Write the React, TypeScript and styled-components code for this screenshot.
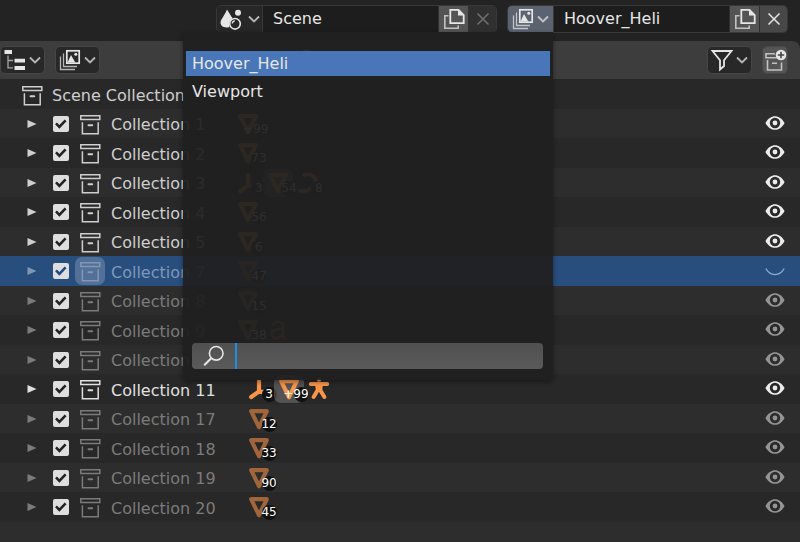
import React from "react";
import styled, { createGlobalStyle, css } from "styled-components";

const GlobalStyle = createGlobalStyle`
  *, *::before, *::after { box-sizing: border-box; }
  body {
    margin: 0;
    min-height: 100vh;
    background: #2d2d2d;
    color: #e6e6e6;
    font: 16px/20px "DejaVu Sans", Verdana, sans-serif;
  }
  button, input { font: inherit; color: inherit; margin: 0; padding: 0; border: 0; }
  button { display: inline-flex; align-items: center; justify-content: center; background: none; }
  svg { display: block; flex: none; overflow: visible; }
`;

/* ---------- icons ---------- */

type IconProps = { size?: number; children: React.ReactNode };

const Icon = ({ size = 20, children }: IconProps) => (
  <svg
    width={size}
    height={size}
    viewBox={`0 0 ${size} ${size}`}
    fill="none"
    stroke="currentColor"
    aria-hidden="true"
  >
    {children}
  </svg>
);

const ChevronIcon = () => (
  <Icon size={12}>
    <path d="M1 3.5 6 8.5 11 3.5" strokeWidth="1.9" opacity="0.75" />
  </Icon>
);

const SceneIcon = () => (
  <Icon size={26}>
    <path d="M8 3.5 13.6 12.5C10.5 14 9.5 17.5 10.5 20.9 6 22.5 1 20.5 1.6 16 2 13 6 9 8 3.5Z" fill="currentColor" stroke="none" />
    <circle cx="19" cy="6.7" r="3" fill="currentColor" stroke="none" />
    <circle cx="16" cy="17.8" r="5.3" strokeWidth="1.6" />
    <path d="M13.2 17.5a3 3 0 0 1 2.6-2.7" strokeWidth="1.3" />
  </Icon>
);

const LayersIcon = () => (
  <Icon size={22}>
    <path d="M1.5 7.5V20.5H16M4.5 4.5V17.5H18" strokeWidth="1.3" opacity="0.75" />
    <rect x="7.8" y="1.8" width="12.4" height="12.4" strokeWidth="1.7" />
    <path d="M8.5 13.5 12 6 16.3 13.5Z" fill="currentColor" stroke="none" />
    <circle cx="16.8" cy="5.2" r="1.5" fill="currentColor" stroke="none" />
  </Icon>
);

const CopyIcon = () => (
  <Icon size={22}>
    <path d="M5.5 7.8H1.8V20.2H15.2V17.5" strokeWidth="1.6" opacity="0.75" />
    <path d="M7.3 1.8H15.5L20.7 7V15.2H7.3Z" strokeWidth="1.8" />
    <path d="M15 1.5V7.5H21Z" fill="currentColor" stroke="none" />
  </Icon>
);

const CloseIcon = () => (
  <Icon size={12}>
    <path d="M0.5 0.5 11.5 11.5M11.5 0.5 0.5 11.5" strokeWidth="1.5" />
  </Icon>
);

const OutlinerIcon = () => (
  <Icon size={22}>
    <path d="M0.5 1H8V5H0.5ZM10.5 9.7H21V13.5H10.5ZM10.5 17H21V21H10.5Z" fill="currentColor" stroke="none" />
    <path d="M4 6.5V18.8H9M4 11.5H9" strokeWidth="1.3" opacity="0.65" />
  </Icon>
);

const FilterIcon = () => (
  <Icon size={22}>
    <path d="M1.5 2H20.5L13 11.3V17L9 20.5V11.3Z" strokeWidth="1.8" />
  </Icon>
);

const NewCollectionIcon = () => (
  <Icon size={22}>
    <path d="M11 4.7H2V8.7H13M3.5 11V21H17.5V13.5M8 14.3H13" strokeWidth="1.6" opacity="0.75" />
    <circle cx="17" cy="6" r="5.3" fill="currentColor" stroke="none" />
    <path d="M17 2.8V9.2M13.8 6H20.2" stroke="#444" strokeWidth="1.6" />
  </Icon>
);

const CollectionIcon = () => (
  <Icon>
    <path d="M0.8 0.8H19.8V4.6H0.8ZM2.4 7.2V18.7H18.2V7.2" strokeWidth="1.5" />
    <path d="M8.5 10.2H12.2" strokeWidth="2" strokeLinecap="round" />
  </Icon>
);

const SearchIcon = () => (
  <Icon size={22}>
    <circle cx="13.2" cy="8.3" r="6.8" strokeWidth="1.6" />
    <path d="M8.2 13.3 1.2 20.3" strokeWidth="2" />
  </Icon>
);

const EyeIcon = () => (
  <Icon>
    <path d="M0.4 10C3 5.3 6.5 3.2 10 3.2S17 5.3 19.6 10C17 14.7 13.5 16.8 10 16.8S3 14.7 0.4 10ZM10 4.8A5.2 5.2 0 1 0 10 15.2 5.2 5.2 0 1 0 10 4.8Z" fill="currentColor" fillRule="evenodd" stroke="none" />
    <circle cx="10" cy="10" r="2.4" fill="currentColor" stroke="none" />
  </Icon>
);

const EyeClosedIcon = () => (
  <Icon>
    <path d="M0.8 8.5C5.5 16.6 14.5 16.6 19.2 8.5" strokeWidth="1.4" />
  </Icon>
);

const TickIcon = () => (
  <Icon size={16}>
    <path d="M3 7.4 6.4 10.8 12.6 4.4" strokeWidth="2.6" />
  </Icon>
);

const ArrowIcon = () => (
  <Icon size={10}>
    <path d="M0.5 1 9.5 5 0.5 9Z" fill="currentColor" stroke="none" />
  </Icon>
);

type ObjectKind = "mesh" | "empty" | "armature" | "curve" | "font";

const objectShapes: Record<ObjectKind, React.ReactNode> = {
  mesh: <path d="M2.2 2.2H17.8L10 18.2Z" strokeWidth="4.2" strokeLinejoin="round" />,
  empty: <path d="M10 2V12.5L2.2 18M10 12.8H17" strokeWidth="4.2" strokeLinecap="round" strokeLinejoin="round" />,
  armature: (
    <>
      <circle cx="10" cy="0.5" r="2.2" fill="currentColor" stroke="none" />
      <path d="M1.8 5H18.2" strokeWidth="4" strokeLinecap="round" />
      <path d="M6 5H14L13 12H7Z" fill="currentColor" stroke="none" />
      <path d="M8.8 11 4.6 18M11.2 11 15.4 18" strokeWidth="4" strokeLinecap="round" />
    </>
  ),
  curve: <path d="M6 2C14 0 19 5 17.5 10M1.5 18C5 18 8 19 12 16" strokeWidth="3.6" strokeLinecap="round" />,
  font: <path d="M4 5.5C7 0.5 15 1 15 6V15.5Q15 18 18 18M15 9C8 9 3.5 10 3.5 14 3.5 19.5 12 19 15 14" strokeWidth="2.6" />,
};

/* ---------- top bar ---------- */

const TopBar = styled.header`
  display: flex;
  justify-content: flex-end;
  gap: 10px;
  height: 41px;
  padding: 5px 12px 8px;
  background: #232323;
`;

const IdBlock = styled.div`
  display: flex;
  flex: 0 1 281px;
  min-width: 0;
  height: 28px;
  border: 1px solid #383838;
  border-radius: 5px;
`;

const MenuAnchor = styled.div`
  position: relative;
  display: flex;
  flex: none;
`;

const BrowseButton = styled.button<{ $open?: boolean }>`
  flex: none;
  width: 46px;
  gap: 3px;
  border-right: 1px solid #383838;
  border-radius: 4px 0 0 4px;
  background: ${(p) => (p.$open ? "#5b6370" : "#272727")};
`;

const NameField = styled.input`
  flex: 1 1 0;
  width: 0;
  min-width: 0;
  padding-left: 10px;
  background: #1d1d1d;
`;

const BlockButton = styled.button<{ $end?: boolean }>`
  flex: none;
  width: ${(p) => (p.$end ? 28 : 30)}px;
  border-left: 1px solid #303030;
  border-radius: ${(p) => (p.$end ? "0 4px 4px 0" : "0")};
  background: ${(p) => (p.$end ? "#484848" : "#545454")};

  &:disabled {
    background: #303030;
    color: #707070;
  }
`;

/* ---------- drop-down ---------- */

const Popup = styled.div`
  position: absolute;
  z-index: 2;
  top: 100%;
  right: 1px;
  display: flex;
  flex-direction: column;
  width: 370px;
  height: 348px;
  padding: 19px 3px 11px;
  border-radius: 0 0 4px 4px;
  background: rgba(32, 32, 32, 0.94);
  box-shadow: 0 2px 5px rgba(0, 0, 0, 0.4);
`;

const Options = styled.div`
  display: flex;
  flex: 1;
  flex-direction: column;
  gap: 3px;
`;

const Option = styled.button<{ $active?: boolean }>`
  flex: none;
  justify-content: flex-start;
  height: 25px;
  padding: 0 6px;
  background: ${(p) => (p.$active ? "#4876b8" : "transparent")};
`;

const SearchBox = styled.label`
  display: flex;
  align-items: center;
  height: 26px;
  margin: 0 7px 0 6px;
  padding-left: 11px;
  gap: 10px;
  overflow: hidden;
  border-radius: 4px;
  background: linear-gradient(#505050, #5a5a5a);
`;

const SearchInput = styled.input`
  flex: 1;
  align-self: stretch;
  min-width: 0;
  border-left: 2px solid #1d8fe0;
  background: none;
`;

/* ---------- outliner ---------- */

const OutlinerHeader = styled.div`
  display: flex;
  align-items: center;
  gap: 10px;
  height: 38px;
  padding: 0 12px 0 0;
  border-radius: 0 8px 0 0;
  background: #3d3d3d;
`;

const HeaderBack = styled.div`
  background: #232323;
`;

const HeaderButton = styled.button<{ $square?: boolean }>`
  flex: none;
  width: ${(p) => (p.$square ? 26 : 45)}px;
  height: 28px;
  gap: 3px;
  border: 1px solid #464646;
  border-radius: 5px;
  background: ${(p) => (p.$square ? "#555" : "#282828")};
`;

const HeaderSearch = styled.label`
  display: flex;
  flex: 0 1 196px;
  align-items: center;
  height: 26px;
  margin: 0 auto;
  border-radius: 4px;
  background: #3a3a3a;
`;

const HeaderInput = styled.input`
  flex: 1;
  min-width: 0;
  background: none;
`;

const RootRow = styled.div`
  display: flex;
  align-items: center;
  gap: 10px;
  height: 30px;
  padding: 3px 22px 0;
  background: #282828;
  color: #cfcfcf;
`;

const Tree = styled.ul`
  margin: 0;
  padding: 0;
  list-style: none;
`;

type Tone = "normal" | "dim" | "active" | "selected";

const toneColor: Record<Tone, string> = {
  normal: "#cfcfcf",
  dim: "#7b7b7b",
  active: "#e0e0e0",
  selected: "#8097b8",
};

const Row = styled.li<{ $tone: Tone }>`
  display: flex;
  align-items: center;
  height: 29px;
  padding: 0 15px 0 27px;
  background: #2d2d2d;
  color: ${(p) => toneColor[p.$tone]};

  &:nth-child(even) {
    height: 30px;
    background: #282828;
  }

  ${(p) =>
    p.$tone === "selected" &&
    css`
      &:nth-child(even) {
        background: #284e7e;
      }
    `}
`;

const Disclosure = styled.button`
  width: 10px;
  height: 26px;
`;

const Check = styled.span<{ $tick: string }>`
  display: grid;
  margin-left: 16px;
  color: ${(p) => p.$tick};

  > * {
    grid-area: 1 / 1;
  }

  svg {
    pointer-events: none;
    visibility: hidden;
  }

  input:checked + svg {
    visibility: visible;
  }
`;

const CheckInput = styled.input`
  width: 16px;
  height: 16px;
  appearance: none;
  border-radius: 2px;
  background: #dedede;
`;

const IconCell = styled.span<{ $lit?: boolean }>`
  display: flex;
  align-items: center;
  justify-content: center;
  width: 30px;
  height: 28px;
  border-radius: 7px;
  background: ${(p) => (p.$lit ? "rgba(255, 255, 255, 0.2)" : "none")};
`;

const CollectionCell = styled(IconCell)`
  margin: 0 6px;
  padding-top: 2px;
`;

const Name = styled.label`
  padding-top: 3px;
  white-space: nowrap;
`;

const Objects = styled.span`
  display: flex;
  flex: 1;
  margin-left: 28px;
`;

const ObjectCell = styled(IconCell)<{ $bright: boolean }>`
  position: relative;
  color: ${(p) => (p.$bright ? "#f7954a" : "#a0653a")};
`;

const Count = styled.span<{ $wide: boolean }>`
  position: absolute;
  right: ${(p) => (p.$wide ? -5 : -3)}px;
  bottom: 1px;
  display: flex;
  justify-content: ${(p) => (p.$wide ? "flex-end" : "center")};
  width: 15px;
  border-radius: 8px;
  background: #111;
  color: #fff;
  font-size: 12px;
  line-height: 15px;
`;

const EyeButton = styled.button<{ $tone: Tone }>`
  width: 20px;
  height: 28px;
  align-self: flex-start;
  color: ${(p) => (p.$tone === "dim" ? "#949494" : p.$tone === "selected" ? "#8ea9d2" : "#ececec")};
`;

type SceneObject = { kind: ObjectKind; count?: string; lit?: boolean };
type Collection = { name: string; tone: Tone; objects: SceneObject[] };

const mesh = (count: string, lit = false): SceneObject => ({ kind: "mesh", count, lit });

const collections: Collection[] = [
  { name: "Collection 1", tone: "normal", objects: [mesh("+99")] },
  { name: "Collection 2", tone: "normal", objects: [mesh("73")] },
  {
    name: "Collection 3",
    tone: "normal",
    objects: [{ kind: "empty", count: "3" }, mesh("54", true), { kind: "curve", count: "8" }],
  },
  { name: "Collection 4", tone: "normal", objects: [mesh("56")] },
  { name: "Collection 5", tone: "normal", objects: [mesh("6")] },
  { name: "Collection 7", tone: "selected", objects: [mesh("47")] },
  { name: "Collection 8", tone: "dim", objects: [mesh("15")] },
  { name: "Collection 9", tone: "dim", objects: [mesh("38"), { kind: "font" }] },
  { name: "Collection 10", tone: "dim", objects: [] },
  {
    name: "Collection 11",
    tone: "active",
    objects: [{ kind: "empty", count: "3" }, mesh("+99", true), { kind: "armature" }],
  },
  { name: "Collection 17", tone: "dim", objects: [mesh("12")] },
  { name: "Collection 18", tone: "dim", objects: [mesh("33")] },
  { name: "Collection 19", tone: "dim", objects: [mesh("90")] },
  { name: "Collection 20", tone: "dim", objects: [mesh("45")] },
];

const CollectionRow = ({ name, tone, objects }: Collection) => {
  const id = name.toLowerCase().replace(" ", "-");
  const selected = tone === "selected";
  return (
    <Row $tone={tone}>
      <Disclosure aria-label={`Expand ${name}`}>
        <ArrowIcon />
      </Disclosure>
      <Check $tick={selected ? "#1f4b86" : "#222"}>
        <CheckInput type="checkbox" id={id} defaultChecked />
        <TickIcon />
      </Check>
      <CollectionCell $lit={selected}>
        <CollectionIcon />
      </CollectionCell>
      <Name htmlFor={id}>{name}</Name>
      <Objects>
        {objects.map(({ kind, count, lit }) => (
          <ObjectCell key={kind} $lit={lit} $bright={tone === "normal" || tone === "active"}>
            <Icon>{objectShapes[kind]}</Icon>
            {count && <Count $wide={count.length > 2}>{count}</Count>}
          </ObjectCell>
        ))}
      </Objects>
      <EyeButton $tone={tone} aria-label={`Toggle visibility of ${name}`}>
        {selected ? <EyeClosedIcon /> : <EyeIcon />}
      </EyeButton>
    </Row>
  );
};

export default function App() {
  return (
    <>
      <GlobalStyle />
      <TopBar>
        <IdBlock>
          <BrowseButton aria-label="Browse scenes">
            <SceneIcon />
            <ChevronIcon />
          </BrowseButton>
          <NameField aria-label="Scene name" defaultValue="Scene" />
          <BlockButton aria-label="New scene">
            <CopyIcon />
          </BlockButton>
          <BlockButton $end disabled aria-label="Remove scene">
            <CloseIcon />
          </BlockButton>
        </IdBlock>
        <IdBlock>
          <MenuAnchor>
            <BrowseButton $open aria-label="Browse view layers" aria-expanded="true">
              <LayersIcon />
              <ChevronIcon />
            </BrowseButton>
            <Popup>
              <Options>
                <Option $active>Hoover_Heli</Option>
                <Option>Viewport</Option>
              </Options>
              <SearchBox>
                <SearchIcon />
                <SearchInput type="text" aria-label="Search view layers" />
              </SearchBox>
            </Popup>
          </MenuAnchor>
          <NameField aria-label="View layer name" defaultValue="Hoover_Heli" />
          <BlockButton aria-label="New view layer">
            <CopyIcon />
          </BlockButton>
          <BlockButton $end aria-label="Remove view layer">
            <CloseIcon />
          </BlockButton>
        </IdBlock>
      </TopBar>
      <main>
        <HeaderBack>
          <OutlinerHeader>
            <HeaderButton aria-label="Editor type">
              <OutlinerIcon />
              <ChevronIcon />
            </HeaderButton>
            <HeaderButton aria-label="Display mode">
              <LayersIcon />
              <ChevronIcon />
            </HeaderButton>
            <HeaderSearch>
              <SearchIcon />
              <HeaderInput type="text" aria-label="Filter outliner" />
            </HeaderSearch>
            <HeaderButton aria-label="Filter">
              <FilterIcon />
              <ChevronIcon />
            </HeaderButton>
            <HeaderButton $square aria-label="New collection">
              <NewCollectionIcon />
            </HeaderButton>
          </OutlinerHeader>
        </HeaderBack>
        <RootRow>
          <CollectionIcon />
          Scene Collection
        </RootRow>
        <Tree>
          {collections.map((c) => (
            <CollectionRow key={c.name} {...c} />
          ))}
        </Tree>
      </main>
    </>
  );
}
